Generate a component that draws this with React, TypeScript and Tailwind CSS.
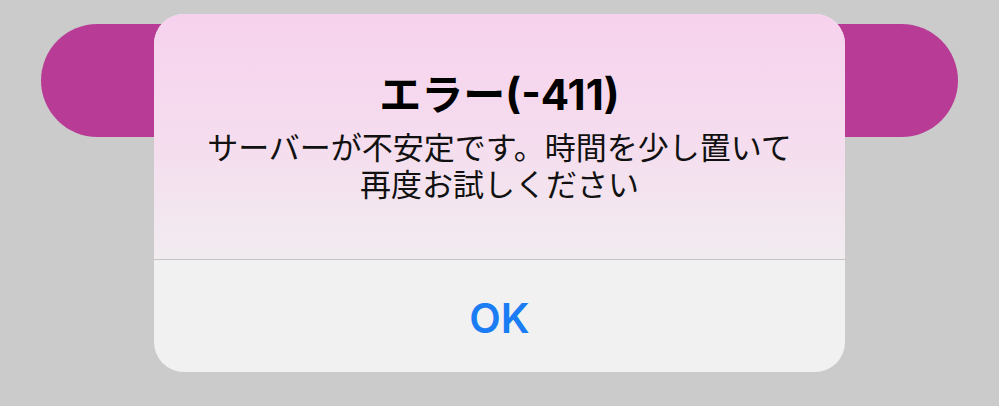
import React from "react";

export default function App() {
  return (
    <div
      className="relative w-[999px] h-[406px] overflow-hidden bg-[#cbcbcb]"
      style={{ fontFamily: 'Inter, "Noto Sans CJK JP", sans-serif' }}
    >
      <div className="ml-[41px] mt-[24px] w-[917px] h-[113px] rounded-full bg-[#b83c96]" />
      <div className="absolute left-[154px] top-[14px] w-[691px] h-[358px] rounded-[30px] overflow-hidden flex flex-col bg-[#f1f1f1]">
        <div className="h-[245px] flex flex-col items-center pt-[56px] bg-gradient-to-b from-[#f7d2ee] via-[#f5dcee] to-[#f1ecf0]">
          <div className="text-[42px] leading-[50px] font-bold text-black">
            エラー(-411)
          </div>
          <div className="mt-[9px] text-[31px] leading-[37px] text-[#111] text-center">
            <div>サーバーが不安定です。時間を少し置いて</div>
            <div>再度お試しください</div>
          </div>
        </div>
        <div className="h-px bg-[#c6c4c6]" />
        <div className="flex-1 flex items-center justify-center pt-[3px]">
          <span className="text-[41px] leading-[48px] font-semibold text-[#1b7df4]">OK</span>
        </div>
      </div>
    </div>
  );
}
